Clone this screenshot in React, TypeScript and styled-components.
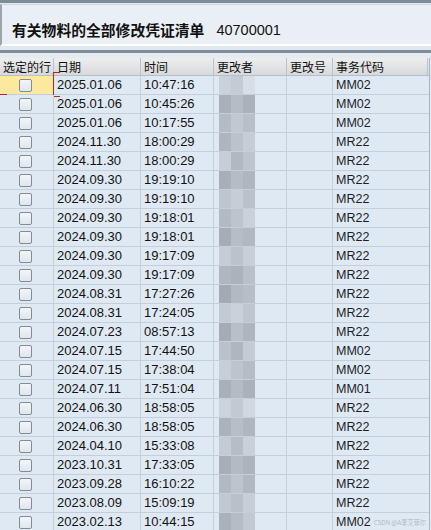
import React from 'react';
import styled, { createGlobalStyle } from 'styled-components';

type Row = { date: string; time: string; tcode: string; shades: string[] };

const s = (a: string, b: string, c: string) => [a, b, c];

const rows: Row[] = [
  { date: '2025.01.06', time: '10:47:16', tcode: 'MM02', shades: s('#c9d1da', '#c3cbd4', '#d6dee6') },
  { date: '2025.01.06', time: '10:45:26', tcode: 'MM02', shades: s('#a9b0ba', '#b5bcc5', '#a9b1bb') },
  { date: '2025.01.06', time: '10:17:55', tcode: 'MM02', shades: s('#b3bbc4', '#c0c8d0', '#b7bfc8') },
  { date: '2024.11.30', time: '18:00:29', tcode: 'MR22', shades: s('#aeb5bf', '#bac2cb', '#c5cdd5') },
  { date: '2024.11.30', time: '18:00:29', tcode: 'MR22', shades: s('#c6ced7', '#b0b8c1', '#bcc4cc') },
  { date: '2024.09.30', time: '19:19:10', tcode: 'MR22', shades: s('#a8afb9', '#b4bcc5', '#aeb6bf') },
  { date: '2024.09.30', time: '19:19:10', tcode: 'MR22', shades: s('#bdc5ce', '#c5cdd6', '#b9c1ca') },
  { date: '2024.09.30', time: '19:18:01', tcode: 'MR22', shades: s('#b2bac3', '#bcc4cd', '#c9d1d9') },
  { date: '2024.09.30', time: '19:18:01', tcode: 'MR22', shades: s('#a6adb7', '#b6bdc6', '#b0b8c1') },
  { date: '2024.09.30', time: '19:17:09', tcode: 'MR22', shades: s('#c4ccd5', '#bac2cb', '#c7cfd8') },
  { date: '2024.09.30', time: '19:17:09', tcode: 'MR22', shades: s('#b0b7c1', '#aab2bc', '#b8c0c9') },
  { date: '2024.08.31', time: '17:27:26', tcode: 'MR22', shades: s('#a3aab4', '#b1b9c2', '#b6bec7') },
  { date: '2024.08.31', time: '17:24:05', tcode: 'MR22', shades: s('#c2cad3', '#c9d1da', '#bec6cf') },
  { date: '2024.07.23', time: '08:57:13', tcode: 'MR22', shades: s('#a5acb6', '#b7bfc8', '#adb5be') },
  { date: '2024.07.15', time: '17:44:50', tcode: 'MM02', shades: s('#b9c1ca', '#aeb6bf', '#c3cbd4') },
  { date: '2024.07.15', time: '17:38:04', tcode: 'MM02', shades: s('#c6ced7', '#bcc4cd', '#b4bcc5') },
  { date: '2024.07.11', time: '17:51:04', tcode: 'MM01', shades: s('#a8b0ba', '#b3bbc4', '#a9b1bb') },
  { date: '2024.06.30', time: '18:58:05', tcode: 'MR22', shades: s('#cbd3dc', '#c1c9d2', '#d0d8e0') },
  { date: '2024.06.30', time: '18:58:05', tcode: 'MR22', shades: s('#aab2bc', '#b6bec7', '#aeb6c0') },
  { date: '2024.04.10', time: '15:33:08', tcode: 'MR22', shades: s('#c3cbd4', '#b5bdc6', '#c8d0d9') },
  { date: '2023.10.31', time: '17:33:05', tcode: 'MR22', shades: s('#a7aeb8', '#b2bac3', '#abb3bd') },
  { date: '2023.09.28', time: '16:10:22', tcode: 'MR22', shades: s('#b1b9c2', '#bcc4cd', '#b0b8c1') },
  { date: '2023.08.09', time: '15:09:19', tcode: 'MR22', shades: s('#c0c8d1', '#b8c0c9', '#c6ced7') },
  { date: '2023.02.13', time: '10:44:15', tcode: 'MM02', shades: s('#a9b1bb', '#b4bcc5', '#c1c9d2') },
];

const GlobalStyle = createGlobalStyle`
  html, body {
    margin: 0;
    padding: 0;
    background: #dfe9f3;
    overflow: hidden;
  }
  body {
    font-family: "Liberation Sans", "Noto Sans CJK SC", sans-serif;
  }
`;

const Screen = styled.div`
  width: 431px;
  height: 530px;
  overflow: hidden;
  background: #dfe9f3;
  border-top: 3px solid #7e8c97;
  box-sizing: border-box;
`;

const TitlePanel = styled.div`
  height: 42px;
  margin-top: 1px;
  background: #e9eff5;
  border-left: 2px solid #9aa5ae;
  border-top: 1px solid #cfd8e0;
  border-bottom: 2px solid #ffffff;
  display: flex;
  align-items: flex-end;
  padding: 0 0 6px 10px;
  box-sizing: border-box;
  gap: 12px;
`;

const TitleText = styled.span`
  font-family: "Noto Sans CJK SC", sans-serif;
  font-weight: 700;
  font-size: 14.8px;
  line-height: 16px;
  color: #111;
`;

const TitleValue = styled.span`
  font-family: "Liberation Sans", sans-serif;
  font-size: 14.5px;
  line-height: 16px;
  color: #111;
`;

const Divider = styled.div`
  height: 5px;
  margin-top: 4px;
  background: #e4ebf2;
  border-top: 3px solid #7d8d99;
  box-sizing: content-box;
`;

const Grid = styled.div`
  width: 429px;
  border-right: 1px solid #aab8c5;
`;

const GridRow = styled.div<{ $header?: boolean }>`
  display: grid;
  grid-template-columns: 54px 87px 73px 73px 46px 95px;
  height: ${(p) => (p.$header ? '18px' : '19px')};
  box-sizing: border-box;
  border-bottom: 1px solid ${(p) => (p.$header ? '#b6bfc8' : '#c3cfdb')};
  background: ${(p) => (p.$header ? 'linear-gradient(#eeeeee, #d8d9db)' : '#dfe9f3')};
`;

const HeadCell = styled.div`
  font-family: "Noto Sans CJK SC", sans-serif;
  font-size: 12px;
  line-height: 17px;
  color: #111;
  padding-left: 3px;
  border-right: 1px solid #b9c3cc;
  white-space: nowrap;
  overflow: hidden;
`;

const Cell = styled.div`
  position: relative;
  font-family: "Liberation Sans", sans-serif;
  font-size: 13px;
  line-height: 18px;
  color: #121212;
  padding-left: 3px;
  border-right: 1px solid #c3cfdb;
  white-space: nowrap;
`;

const CodeCell = styled(Cell)`
  font-size: 12.5px;
  color: #1b1d2a;
  border-right: none;
`;

const SelectCell = styled.div<{ $active?: boolean }>`
  position: relative;
  display: flex;
  align-items: center;
  justify-content: center;
  background: ${(p) => (p.$active ? '#fde99d' : 'transparent')};
  border-right: 1px solid #c3cfdb;
`;

const Check = styled.span`
  width: 11px;
  height: 11px;
  border: 1px solid #858b91;
  border-radius: 2px;
  background: linear-gradient(#f3f6f9, #dfe6ee);
  margin-right: 2px;
`;

const Blur = styled.div`
  display: flex;
  height: 100%;
  padding-left: 2px;
`;

const Pix = styled.span`
  width: 12px;
  height: 100%;
`;

/* red focus frame corners around the current cell */
const FocusLeft = styled.span`
  position: absolute;
  left: 0;
  bottom: -1px;
  width: 7px;
  border-bottom: 1px solid #b0242a;
`;

const FocusRight = styled.span`
  position: absolute;
  right: -7px;
  top: -4px;
  bottom: -3px;
  width: 6px;
  border-left: 1px solid #b0242a;
  border-top: 1px solid #b0242a;
  border-bottom: 1px solid #b0242a;
`;

const Watermark = styled.span`
  margin-left: 3px;
  font-family: "Noto Sans CJK SC", sans-serif;
  font-size: 6.5px;
  letter-spacing: -0.2px;
  color: rgba(160, 170, 180, 0.8);
  vertical-align: 1px;
`;

export default function App() {
  return (
    <>
      <GlobalStyle />
      <Screen>
        <TitlePanel>
          <TitleText>有关物料的全部修改凭证清单</TitleText>
          <TitleValue>40700001</TitleValue>
        </TitlePanel>
        <Divider />
        <Grid>
          <GridRow $header>
            <HeadCell>选定的行</HeadCell>
            <HeadCell>日期</HeadCell>
            <HeadCell>时间</HeadCell>
            <HeadCell>更改者</HeadCell>
            <HeadCell>更改号</HeadCell>
            <HeadCell>事务代码</HeadCell>
          </GridRow>
          {rows.map((r, i) => (
            <GridRow key={i}>
              <SelectCell $active={i === 0}>
                {i === 0 && <FocusLeft />}
                {i === 0 && <FocusRight />}
                <Check />
              </SelectCell>
              <Cell>{r.date}</Cell>
              <Cell>{r.time}</Cell>
              <Cell>
                <Blur>
                  {r.shades.map((c, j) => (
                    <Pix key={j} style={{ background: c }} />
                  ))}
                </Blur>
              </Cell>
              <Cell />
              <CodeCell>
                {r.tcode}
                {i === rows.length - 1 && <Watermark>CSDN @A李艾菲尔</Watermark>}
              </CodeCell>
            </GridRow>
          ))}
        </Grid>
      </Screen>
    </>
  );
}
